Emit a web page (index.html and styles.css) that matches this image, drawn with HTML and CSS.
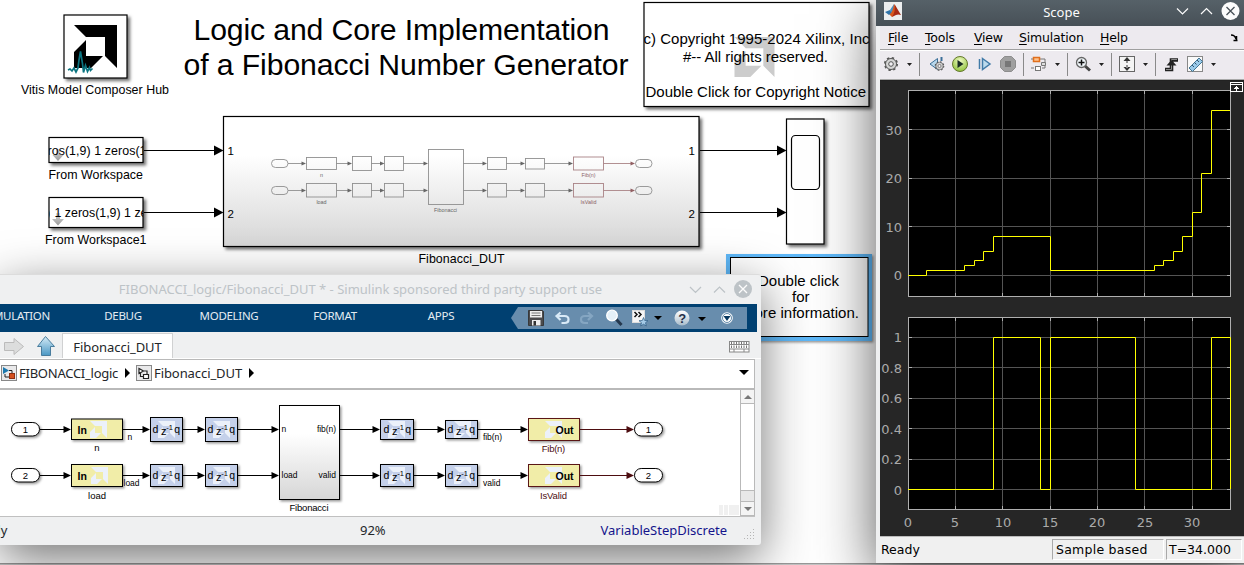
FILE: index.html
```html
<!DOCTYPE html>
<html lang="en">
<head>
<meta charset="utf-8">
<title>Fibonacci Number Generator</title>
<link rel="stylesheet" href="styles.css">
</head>
<body>
<main class="desktop">

<svg class="model" width="876" height="565" viewBox="0 0 876 565">
  <defs>
    <linearGradient id="sub" x1="0" y1="0" x2="0" y2="1"><stop offset=".3" stop-color="#fff"/><stop offset="1" stop-color="#d6d6d6"/></linearGradient>
    <linearGradient id="tip" x1="0" y1="0" x2="0" y2="1"><stop offset="0" stop-color="#ddd"/><stop offset="1" stop-color="#999"/></linearGradient>
    <filter id="drop" x="-20%" y="-20%" width="150%" height="150%"><feDropShadow dx="2.5" dy="2.5" stdDeviation="1.5" flood-color="#000" flood-opacity=".55"/></filter>
    <filter id="soft" x="-20%" y="-20%" width="150%" height="160%"><feDropShadow dx="1.5" dy="1.5" stdDeviation="1" flood-color="#000" flood-opacity=".4"/></filter>
    <path id="head" d="M-9.5-5L0 0L-9.5 5Z"/>
    <path id="minihead" d="M-4.5-2L0 0L-4.5 2Z"/>
    <path id="amd" d="M0 0H43V43L31 31V12H12ZM12 15V31H29L17 43H0V27Z"/>
    <clipPath id="c1"><rect x="49" y="138" width="94" height="25"/></clipPath>
    <clipPath id="c2"><rect x="49" y="198" width="94" height="30"/></clipPath>
    <clipPath id="c3"><rect x="644" y="3" width="225" height="103"/></clipPath>
  </defs>

  <rect class="block" x="64" y="15" width="63" height="63" filter="url(#drop)"/>
  <use href="#amd" x="74" y="25"/>
  <path d="M68 70l2-1 2 2 2-3 2 4 2-4 1-8 1.500-8.500 2 12 1 9 2-7 2 6 2-4 1 3 2-2" fill="none" stroke="#0b7480" stroke-width="1.700"/>
  <text x="21" y="94" font-size="12.400" textLength="148">Vitis Model Composer Hub</text>

  <text x="193.500" y="39.500" font-size="30.200" textLength="416">Logic and Core Implementation</text>
  <text x="183.500" y="74.500" font-size="30.200" textLength="445">of a Fibonacci Number Generator</text>

  <rect class="block" x="644" y="2.500" width="225" height="104" filter="url(#drop)"/>
  <use href="#amd" fill="#ccc" transform="translate(734.500 37) scale(.93)"/>
  <g clip-path="url(#c3)" font-size="15">
    <text x="643.500" y="44" textLength="226">c) Copyright 1995-2024 Xilinx, Inc</text>
    <text x="683" y="62" textLength="145">#-- All rights reserved.</text>
    <text x="645.500" y="97" textLength="220.500">Double Click for Copyright Notice</text>
  </g>

  <rect class="block" x="49" y="137.500" width="94" height="25" filter="url(#drop)"/>
  <path d="M56 149h4v6h3.500l-5.500 6-5.500-6h3.500z" fill="url(#tip)"/>
  <text x="47.500" y="155" font-size="12.400" textLength="99" clip-path="url(#c1)">ros(1,9) 1 zeros(1</text>
  <text x="48.500" y="179" font-size="12.400" textLength="94.500">From Workspace</text>
  <rect class="block" x="49" y="197.500" width="94" height="30" filter="url(#drop)"/>
  <path d="M56 213h4v6h4l-6 6.500-6-6.500h4z" fill="url(#tip)"/>
  <g clip-path="url(#c2)"><text x="46" y="217" font-size="12.400">)</text><text x="54.500" y="217" font-size="12.400" textLength="93">1 zeros(1,9) 1 ze</text></g>
  <text x="45" y="244" font-size="12.400" textLength="101.500">From Workspace1</text>

  <path class="wire" d="M144 150.500H215M144 212.500H215M700 150.500H778M700 212.500H778"/>
  <use href="#head" x="223.500" y="150.500"/><use href="#head" x="223.500" y="212.500"/>
  <rect class="block" x="223.500" y="116.500" width="475.500" height="130" style="fill:url(#sub)" filter="url(#drop)"/>
  <g font-size="11.500"><text x="227.500" y="155">1</text><text x="227.500" y="218">2</text><text x="688.500" y="155">1</text><text x="688.500" y="218">2</text></g>
  <text x="418.500" y="263" font-size="12.400" textLength="86">Fibonacci_DUT</text>

  <g class="mini">
    <rect x="271.500" y="159.500" width="16.500" height="8" rx="4"/><rect x="271.500" y="186.500" width="16.500" height="8" rx="4"/>
    <rect x="306.500" y="157.500" width="30" height="12"/><rect x="306.500" y="183.500" width="30" height="13.500"/>
    <rect x="352.500" y="156.500" width="19" height="14"/><rect x="352.500" y="183.500" width="19" height="13.500"/>
    <rect x="384.500" y="156.500" width="19" height="14"/><rect x="384.500" y="183.500" width="19" height="13.500"/>
    <rect x="428.500" y="149.500" width="35" height="55"/>
    <rect x="487.500" y="157.500" width="19" height="12"/><rect x="487.500" y="183.500" width="19" height="13.500"/>
    <rect x="525.500" y="158.500" width="19" height="10.500"/><rect x="525.500" y="183.500" width="19" height="13.500"/>
    <rect x="635.500" y="159.500" width="16.500" height="8" rx="4"/><rect x="635.500" y="186.500" width="16.500" height="8" rx="4"/>
    <path d="M288 163.500H303M336 163.500H349M371 163.500H381M403 163.500H425M463 163.500H484M506 163.500H522M544 163.500H570M288 190.500H303M336 190.500H349M371 190.500H381M403 190.500H425M463 190.500H484M506 190.500H522M544 190.500H570"/>
    <g class="rose"><rect x="573.500" y="157" width="30" height="13"/><rect x="573.500" y="183.500" width="30" height="13.500"/><path d="M603.500 163.500H632M603.500 190.500H632"/></g>
  </g>
  <g fill="#666">
    <use href="#minihead" x="306" y="163.500"/><use href="#minihead" x="352" y="163.500"/><use href="#minihead" x="384.500" y="163.500"/><use href="#minihead" x="428" y="163.500"/><use href="#minihead" x="487" y="163.500"/><use href="#minihead" x="525" y="163.500"/><use href="#minihead" x="573" y="163.500"/>
    <use href="#minihead" x="306" y="190.500"/><use href="#minihead" x="352" y="190.500"/><use href="#minihead" x="384.500" y="190.500"/><use href="#minihead" x="428" y="190.500"/><use href="#minihead" x="487" y="190.500"/><use href="#minihead" x="525" y="190.500"/><use href="#minihead" x="573" y="190.500"/>
  </g>
  <g fill="#915f62"><use href="#minihead" x="635" y="163.500"/><use href="#minihead" x="635" y="190.500"/></g>
  <g font-size="5.400" text-anchor="middle" fill="#666"><text x="321.500" y="177">n</text><text x="321.500" y="204">load</text><text x="445.500" y="212">Fibonacci</text><g fill="#8a6265"><text x="588.500" y="177">Fib(n)</text><text x="588.500" y="204">IsValid</text></g></g>

  <rect class="block" x="786.500" y="119" width="37.500" height="125" filter="url(#drop)"/>
  <rect x="791.500" y="135.500" width="28" height="54" rx="4" fill="none" stroke="#000" stroke-width="1.200"/>
  <use href="#head" x="786.500" y="150.500"/><use href="#head" x="786.500" y="212.500"/>

  <rect x="728" y="256" width="142" height="83" fill="#fff" stroke="#5fb8f8" stroke-width="4" filter="url(#soft)"/>
  <rect x="730.500" y="257.500" width="137.500" height="79" fill="#fff" stroke="#000"/>
  <g font-size="15"><text x="758" y="286" textLength="81">Double click</text><text x="792" y="302">for</text><text x="742" y="318" textLength="117">more information.</text></g>
</svg>
<div class="model-edge"></div>

<section class="win editor">
  <header class="ed-title">
    <span class="ed-caption">FIBONACCI_logic/Fibonacci_DUT * - Simulink sponsored third party support use</span>
    <svg width="72" height="30" fill="none">
      <path d="M4 12l5.500 5.500L15 12M28 17.500L33.500 12 39 17.500" stroke="#bdc3c7" stroke-width="1.200"/>
      <circle cx="57" cy="14" r="9" fill="#bdc3c7"/><path d="M53 10l8 8M61 10l-8 8" stroke="#fcfcfc" stroke-width="1.300"/>
    </svg>
  </header>
  <nav class="strip">
    <span class="tab t1">SIMULATION</span><span class="tab t2">DEBUG</span><span class="tab t3">MODELING</span><span class="tab t4">FORMAT</span><span class="tab t5">APPS</span>
    <svg class="quick" width="238" height="22" viewBox="510 307 238 22">
      <defs>
        <linearGradient id="orb" x1="0" y1="0" x2="0" y2="1"><stop offset="0" stop-color="#fff"/><stop offset="1" stop-color="#a9bccb"/></linearGradient>
      </defs>
      <path d="M511 318L518 307H747V329H518Z" fill="#688dad"/>
      <path d="M528.500 310.500h14l1 1v14h-15z" fill="#4b4b4d" stroke="#37383a"/><rect x="530" y="311" width="12" height="6.500" fill="#eee"/><path d="M531.500 313h9M531.500 315.500h9" stroke="#777"/><rect x="532" y="320" width="8.500" height="5.500" fill="#eee"/><rect x="533.500" y="321" width="2.500" height="4.500" fill="#333"/>
      <path d="M560.500 312.500l-4 3.500 4 4M557 316h7.500q4 0 4 3.500t-4 3.500h-3" fill="none" stroke="#d9eaf7" stroke-width="2.200"/>
      <path d="M588 312.500l4 3.500-4 4M592 316h-7q-4 0-4 3.500t4 3.500h3" fill="none" stroke="#85a6c2" stroke-width="2.200"/>
      <path d="M616 319l5.500 6" stroke="#25384d" stroke-width="3"/><circle cx="612" cy="315.500" r="5.300" fill="#e4f0f8" stroke="#fff" stroke-width="1.300"/>
      <rect x="632.500" y="310.500" width="12" height="12" fill="#f6f6f6" stroke="#ddd"/><path d="M634.500 312l2.500 2.500-2.500 2.500M638.500 312l2.500 2.500-2.500 2.500" fill="none" stroke="#111" stroke-width="1.500"/><path d="M643.500 317.500l1.200 3 3.300.2-2.500 2 .8 3.300-2.800-1.800-2.800 1.800.8-3.300-2.500-2 3.300-.2z" fill="#a5cbe8" stroke="#2d5b84" stroke-width=".7"/>
      <path d="M654 316h8l-4 4zM698 317h8l-4 4z" fill="#000"/>
      <circle cx="682" cy="318" r="7.500" fill="url(#orb)"/><text x="682" y="323" text-anchor="middle" font-size="13" font-weight="bold" fill="#222f48">?</text>
      <circle cx="727" cy="318" r="5.800" fill="#fff"/><circle cx="727" cy="318" r="4.500" fill="#fff" stroke="#3c6d94" stroke-width=".8"/><path d="M723.500 316h7l-3.500 5z" fill="#07385f"/>
    </svg>
  </nav>
  <div class="docs">
    <svg width="62" height="27" viewBox="0 332 62 27"><defs><linearGradient id="up" x1="0" y1="0" x2="0" y2="1"><stop offset="0" stop-color="#d5ebf6"/><stop offset="1" stop-color="#4a97c4"/></linearGradient></defs>
      <path d="M4.500 343.500H14V339.500L23.500 347.500 14 355.500V351.500H4.500Z" fill="#dcdddd" stroke="#bbb"/>
      <path d="M45.500 337.500L54.500 347.500H50.500V356.500H41.500V347.500H37.500Z" fill="url(#up)" stroke="#497d9e"/></svg>
    <span class="doc-tab">Fibonacci_DUT</span>
    <svg class="keys" width="21" height="12" viewBox="0 0 21 12"><rect x=".5" y=".5" width="19.500" height="10.500" fill="#fff" stroke="#888"/><path d="M1 3.500h19M1 8h19M5 8v3M15 8v3" stroke="#888" fill="none"/><path d="M2 2h17M2 5.800h17" stroke="#777" stroke-width="2.500" stroke-dasharray="1 1.500"/></svg>
  </div>
  <div class="crumbs">
    <svg width="16" height="16"><rect x=".5" y=".5" width="15" height="15" fill="#e9e9ea" stroke="#888"/><path d="M2 2l6 3.500L2 9z" fill="#1d79ae"/><path d="M8 5.500h3V9M4 9v3h4" fill="none" stroke="#222"/><rect x="8.500" y="8.500" width="5" height="5" fill="#d4501e" stroke="#8f2f10"/></svg>
    <span class="crumb c-root">FIBONACCI_logic</span><i class="arr"></i>
    <svg width="16" height="16"><rect x=".5" y=".5" width="15" height="15" fill="#e9e9ea" stroke="#888"/><path d="M3 3.500l4.500 2.500L3 8.500zM7.500 6h3.500v3M4.500 8v3.500h3M7.500 9.500h5v4h-5z" fill="#fff" stroke="#222" stroke-width="1.200"/></svg>
    <span class="crumb c-sub">Fibonacci_DUT</span><i class="arr"></i>
    <i class="drop"></i>
  </div>
  <div class="canvas-row">
    <svg class="sheet" width="740" height="126" viewBox="0 390 740 126">
      <defs>
        <g id="delay"><text x="2.500" y="4" font-size="10.500">d</text><text x="11" y="6" font-size="11">z</text><text x="16.300" y="0.500" font-size="7.500">-1</text><text x="24.300" y="4" font-size="10.500">q</text></g>
        <path id="logo" d="M0 0H17V17L12 12V5H5ZM5 6V12H11L6 17H0V11Z" fill="#ecf1fa"/>
        <path id="h2" d="M-7.500-3.500L0 0L-7.500 3.500Z"/>
      </defs>
      <g filter="url(#soft)" stroke="#000" fill="#fff">
        <rect x="11.500" y="422.500" width="28" height="13.500" rx="6.700"/><rect x="11.500" y="468.500" width="28" height="13.500" rx="6.700"/>
        <rect x="634.500" y="422.500" width="28" height="13.500" rx="6.700"/><rect x="634.500" y="468.500" width="28" height="13.500" rx="6.700"/>
        <g fill="#f1eda8"><rect x="71.500" y="419" width="51" height="20.500"/><rect x="71.500" y="464.500" width="51" height="22"/>
        <g stroke="#5a1618"><rect x="528.500" y="418.500" width="51" height="22"/><rect x="528.500" y="464.500" width="51" height="22"/></g></g>
        <g fill="#c4d0ea"><rect x="150.500" y="417.500" width="32" height="24"/><rect x="205.500" y="417.500" width="32" height="24"/><rect x="380.500" y="419.500" width="33" height="20"/><rect x="445.500" y="420.500" width="32" height="18"/>
        <rect x="150.500" y="464.500" width="32" height="22"/><rect x="205.500" y="464.500" width="32" height="22"/><rect x="380.500" y="464.500" width="33" height="22"/><rect x="445.500" y="464.500" width="32" height="22"/></g>
        <rect x="279.500" y="405.500" width="60" height="94" style="fill:url(#sub)"/>
      </g>
      <use href="#logo" x="90" y="421"/><use href="#logo" x="91" y="467"/><use href="#logo" x="545" y="421"/><use href="#logo" x="545" y="467"/>
      <use href="#logo" x="158" y="421"/><use href="#logo" x="213" y="421"/><use href="#logo" x="388" y="421"/><use href="#logo" x="454" y="421"/>
      <use href="#logo" x="158" y="467"/><use href="#logo" x="213" y="467"/><use href="#logo" x="388" y="467"/><use href="#logo" x="454" y="467"/>
      <path class="wire" d="M40 429.500H66M123 429.500H144M183 429.500H200M238 429.500H274M340 429.500H374M414 429.500H440M478 429.500H523M40 475.500H66M123 475.500H144M183 475.500H200M238 475.500H274M340 475.500H374M414 475.500H440M478 475.500H523"/>
      <path class="wire" d="M580 429.500H628M580 475.500H628" style="stroke:#4d0d10"/>
      <use href="#h2" x="71" y="429.500"/><use href="#h2" x="150" y="429.500"/><use href="#h2" x="205" y="429.500"/><use href="#h2" x="279" y="429.500"/><use href="#h2" x="380" y="429.500"/><use href="#h2" x="445" y="429.500"/><use href="#h2" x="528" y="429.500"/>
      <use href="#h2" x="71" y="475.500"/><use href="#h2" x="150" y="475.500"/><use href="#h2" x="205" y="475.500"/><use href="#h2" x="279" y="475.500"/><use href="#h2" x="380" y="475.500"/><use href="#h2" x="445" y="475.500"/><use href="#h2" x="528" y="475.500"/>
      <g fill="#4d0d10"><use href="#h2" x="634" y="429.500"/><use href="#h2" x="634" y="475.500"/></g>
      <use href="#delay" x="150" y="429"/><use href="#delay" x="205" y="429"/><use href="#delay" x="381" y="429"/><use href="#delay" x="445" y="429"/>
      <use href="#delay" x="150" y="475"/><use href="#delay" x="205" y="475"/><use href="#delay" x="381" y="475"/><use href="#delay" x="445" y="475"/>
      <g font-size="10.500" font-weight="bold"><text x="77.500" y="434">In</text><text x="77.500" y="480">In</text><text x="555.500" y="434" textLength="18">Out</text><text x="555.500" y="480" textLength="18">Out</text></g>
      <g font-size="9.500" text-anchor="middle"><text x="25.500" y="433">1</text><text x="25.500" y="479">2</text><text x="648.500" y="433">1</text><text x="648.500" y="479">2</text></g>
      <g font-size="9.500" text-anchor="middle"><text x="97" y="451">n</text><text x="97" y="499">load</text><text x="309" y="511" textLength="39">Fibonacci</text><g fill="#4d0d10"><text x="553.500" y="452" textLength="23.500">Fib(n)</text><text x="553.500" y="499" textLength="27">IsValid</text></g></g>
      <g font-size="8.500"><text x="127.500" y="440">n</text><text x="123.500" y="486">load</text><text x="483" y="440" textLength="19">fib(n)</text><text x="483" y="486">valid</text><text x="281.500" y="432">n</text><text x="281.500" y="478">load</text><text x="317" y="432" textLength="19">fib(n)</text><text x="318.500" y="478">valid</text></g>
      <path d="M719 505h4v10h-4zM724 505h4v10h-4zM729 505h10v10h-10z" fill="#f0f0f0"/>
    </svg>
    <div class="scroll"><i class="sb-up"></i><i class="sb-track"></i><i class="sb-thumb"></i><i class="sb-down"></i></div>
  </div>
  <footer class="ed-status"><span class="rdy">Ready</span><span class="zoom">92%</span><span class="solver">VariableStepDiscrete</span>
    <svg class="grip" width="11" height="12" fill="#b5b5b5"><path d="M9 0h1v1h-1zM6 3h1v1h-1zM9 3h1v1h-1zM3 6h1v1h-1zM6 6h1v1h-1zM9 6h1v1h-1zM0 9h1v1h-1zM3 9h1v1h-1zM6 9h1v1h-1zM9 9h1v1h-1z"/></svg></footer>
</section>

<section class="win scope">
  <header class="sc-title">
    <svg width="18" height="18"><rect width="18" height="18" fill="#eceeef"/><path d="M1 10l5-2 2 3-3 2z" fill="#2f73a8"/><path d="M6 8l4-6 1 8-3 3z" fill="#4b8fc0"/><path d="M10 2q2 3 3.500 8L8 15 5.500 12.500Q9 10 10 2z" fill="#d8581c"/><path d="M10.500 2Q14 8 17 13q-3-1-5 0L8 15q4-6 2.500-13z" fill="#a82a15"/></svg>
    <span class="sc-caption">Scope</span>
    <svg width="68" height="26" fill="none"><path d="M5 8.500l5.500 5.500L16 8.500M29 14L34.500 8.500 40 14" stroke="#fcfcfc" stroke-width="1.200"/><circle cx="58.500" cy="11" r="9" fill="#fcfcfc"/><path d="M54.500 7l8 8M62.500 7l-8 8" stroke="#475057" stroke-width="1.300"/></svg>
  </header>
  <div class="sc-body">
    <nav class="menu"><span class="m1"><u>F</u>ile</span><span class="m2"><u>T</u>ools</span><span class="m3"><u>V</u>iew</span><span class="m4"><u>S</u>imulation</span><span class="m5"><u>H</u>elp</span>
      <svg width="8" height="8"><path d="M1 1q4 0 5 4M3.500 6.500h4M6.500 2v4.500" fill="none" stroke="#000" stroke-width="1.500"/></svg></nav>
    <svg class="tools" width="364" height="30" viewBox="880 51 364 28">
      <defs><radialGradient id="go" cx=".5" cy=".3" r=".8"><stop offset="0" stop-color="#eefac2"/><stop offset="1" stop-color="#83bb29"/></radialGradient>
      <g id="gear"><circle r="5.500" fill="#d5d5d5" stroke="#555"/><circle r="6.300" fill="none" stroke="#555" stroke-width="1.500" stroke-dasharray="2.400 2.550"/><circle r="2.300" fill="#f1eff3" stroke="#555"/></g></defs>
      <path d="M919.500 53v23M1023.500 53v23M1067.500 53v23M1111.500 53v23M1155.500 53v23" stroke="#8a8a8a"/>
      <use href="#gear" x="891" y="64"/>
      <path d="M907 63h5l-2.500 3zM1055 63h5l-2.500 3zM1099 63h5l-2.500 3zM1143 63h5l-2.500 3zM1211 63h5l-2.500 3z" fill="#222"/>
      <path d="M937.500 58.500v11l-7.500-5.500z" fill="#b8d7ec" stroke="#3b6f98"/><path d="M941.500 57v4" stroke="#3b6f98" stroke-width="2"/><use href="#gear" transform="translate(939.500 66) scale(.68)"/>
      <circle cx="960" cy="64" r="7.500" fill="url(#go)" stroke="#65782e"/><path d="M957.500 60l6 4-6 4z" fill="#182c22"/>
      <path d="M979.500 59v10M982.500 58.500l7.500 5.500-7.500 5.500z" fill="#bddbed" stroke="#427ba8" stroke-width="1.500"/>
      <path d="M1004.500 56.500h7l4 4v7l-4 4h-7l-4-4v-7z" fill="#9f9f9f" stroke="#8d8d8d"/><rect x="1005" y="61" width="6" height="6" fill="#777"/>
      <path d="M1031 59h14v9h-3M1034 68h-3" fill="none" stroke="#777"/><rect x="1033.500" y="57.500" width="6" height="4" fill="#ffc18a" stroke="#e06f1d" stroke-width="1.500"/><rect x="1035.500" y="66.500" width="5" height="4" fill="#fff" stroke="#777"/><path d="M1041.500 62.500h4v3h-4z" fill="#ddd" stroke="#777"/>
      <path d="M1085 66l5 4.500" stroke="#444" stroke-width="3"/><circle cx="1081.500" cy="62.500" r="5" fill="#f0f6fa" stroke="#666" stroke-width="1.300"/><path d="M1078.500 62.500h6M1081.500 59.500v6" stroke="#111" stroke-width="1.500"/>
      <rect x="1119.500" y="56.500" width="15" height="15" fill="#f4f4f4" stroke="#666"/><path d="M1123.500 61l3.500-4 3.500 4zM1123.500 67l3.500 4 3.500-4zM1126.500 60h1v3h-1zM1126.500 65h1v3h-1z" fill="#333"/>
      <path d="M1165 69.500h6.500V60H1178" fill="none" stroke="#222" stroke-width="3.600"/><path d="M1166 69.500h5.500V59.500H1177" fill="none" stroke="#888" stroke-width="1"/><path d="M1166.500 65.500h10l-5-5.500z" fill="#222"/>
      <rect x="1187.500" y="56.500" width="15" height="15" fill="#fafafa" stroke="#888"/><path d="M1189 68l10-10 3.500 3.500L1192.500 71.500z" fill="#9bcbea" stroke="#427594"/><path d="M1192 65l2 2M1194.500 62.500l2 2M1197 60l2 2" stroke="#31546c"/>
    </svg>
    <svg class="plots" width="364" height="456" viewBox="880 81 364 455">
      <rect x="908" y="90" width="323" height="207"/><rect x="908" y="317" width="323" height="193"/>
      <path d="M955.500 91V296M1002.500 91V296M1050.500 91V296M1097.500 91V296M1144.500 91V296M1192.500 91V296M909 129.500H1230M909 178.500H1230M909 226.500H1230M909 275.500H1230M955.500 318V509M1002.500 318V509M1050.500 318V509M1097.500 318V509M1144.500 318V509M1192.500 318V509M909 337.500H1230M909 367.500H1230M909 398.500H1230M909 428.500H1230M909 459.500H1230M909 489.500H1230" stroke="#545454"/>
      <g fill="none" stroke="#afafaf"><rect x="908.500" y="90.500" width="322" height="206"/><rect x="908.500" y="317.500" width="322" height="192"/>
      <path d="M955.500 91v3m0 199v3M1002.500 91v3m0 199v3M1050.500 91v3m0 199v3M1097.500 91v3m0 199v3M1144.500 91v3m0 199v3M1192.500 91v3m0 199v3M955.500 318v3m0 185v3M1002.500 318v3m0 185v3M1050.500 318v3m0 185v3M1097.500 318v3m0 185v3M1144.500 318v3m0 185v3M1192.500 318v3m0 185v3M909 129.500h3m315 0h3M909 178.500h3m315 0h3M909 226.500h3m315 0h3M909 275.500h3m315 0h3M909 337.500h3m315 0h3M909 367.500h3m315 0h3M909 398.500h3m315 0h3M909 428.500h3m315 0h3M909 459.500h3m315 0h3M909 489.500h3m315 0h3"/></g>
      <g fill="none" stroke="#ff0"><path d="M908 275.500H926.500V270.500H964.500V265.500H974.500V260.500H983.500V251.500H993.500V236.500H1050.500V270.500H1154.500V265.500H1163.500V260.500H1173.500V251.500H1182.500V236.500H1192.500V212.500H1201.500V173.500H1211.500V110.500H1230"/>
      <path d="M908 489.500H993.500V337.500H1040.500V489.500H1050.500V337.500H1135.500V489.500H1211.500V337.500H1230.500V489"/></g>
      <g class="ticks" text-anchor="end"><text x="902" y="135">30</text><text x="902" y="183">20</text><text x="902" y="232">10</text><text x="902" y="280">0</text><text x="902" y="342">1</text><text x="902" y="373">0.8</text><text x="902" y="403">0.6</text><text x="902" y="434">0.4</text><text x="902" y="464">0.2</text><text x="902" y="495">0</text></g>
      <g class="ticks" text-anchor="middle"><text x="908" y="527">0</text><text x="955" y="527">5</text><text x="1003" y="527">10</text><text x="1050" y="527">15</text><text x="1097" y="527">20</text><text x="1145" y="527">25</text><text x="1192" y="527">30</text></g>
      <rect x="1230.500" y="82.500" width="12" height="9" fill="#262626" stroke="#fff"/><path d="M1231 84.500h11M1236.500 86v5M1234 88.500h5M1235 87.500h3" stroke="#fff"/>
    </svg>
    <footer class="sc-status"><span class="ready">Ready</span><span class="cell sample">Sample based</span><span class="cell time">T=34.000</span></footer>
  </div>
</section>
</main>
</body>
</html>
```

FILE: styles.css
```css
* { box-sizing: border-box; }
body { margin: 0; }
.desktop { position: relative; width: 1244px; height: 565px; overflow: hidden; background: #fff; font-family: "Noto Sans", sans-serif; font-size: 13px; }
.desktop svg { display: block; flex: none; }
.desktop svg text { white-space: pre; }

/* model canvas */
.model, .sheet, .quick { font-family: "Liberation Sans", Arial, sans-serif; }
.model { position: absolute; left: 0; top: 0; }
.block { fill: #fff; stroke: #000; stroke-width: 1.2; }
.wire { fill: none; stroke: #000; }
.mini { fill: none; stroke: #909090; stroke-width: .9; }
.mini .rose { stroke: #a98386; }
.model-edge { position: absolute; left: 0; bottom: 0; width: 100%; height: 2px; background: #c4c4c4; border-top: 1px solid #999; }

.win { position: absolute; display: flex; flex-direction: column; }

/* subsystem editor */
.editor { left: 0; top: 274px; width: 761px; height: 271px; background: #eff0f1; border-top: 1px solid #dcdcdc; border-radius: 0 3px 3px 0; box-shadow: 0 14px 50px rgba(0,0,0,.55); color: #232629; }
.ed-title { height: 29px; display: flex; justify-content: flex-end; color: #bdc3c7; line-height: 29px; }
.ed-caption { margin-right: 84px; white-space: nowrap; }
.ed-title svg { margin-right: 3px; }
.strip { height: 28px; width: 757px; background: #004071; display: flex; align-items: center; color: #e4ecf2; font-size: 11.5px; letter-spacing: -.3px; }
.tab { flex: none; width: 106px; text-align: center; line-height: 24px; height: 28px; }
.t1 { width: 69px; margin-left: -19px; text-align: right; }
.t2 { margin-left: 20px; }
.quick { margin-left: auto; margin-right: 9px; }
.docs { height: 27px; display: flex; align-items: flex-end; border-bottom: 1px solid #fff; }
.doc-tab { width: 111px; height: 25px; background: #fff; border: 1px solid #d0d1d2; border-bottom: 0; text-align: center; line-height: 26px; letter-spacing: -.05px; }
.keys { margin-left: auto; margin-right: 11px; margin-bottom: 5px; }
.crumbs { height: 31px; width: 755px; background: #fff; border: solid #b9b9b9; border-width: 1px 1px 2px 0; display: flex; align-items: center; padding-left: 1px; padding-bottom: 3px; }
.crumb { margin-left: 2px; white-space: nowrap; width: 106px; }
.c-root { letter-spacing: -.25px; }
.c-sub { width: 95px; letter-spacing: -.08px; }
.arr { border: solid transparent; border-width: 5px 0 5px 5px; border-left-color: #000; margin-right: 6px; }
.drop { border: solid transparent; border-width: 5px 5px 0; border-top-color: #000; margin-left: auto; margin-right: 5px; }
.canvas-row { height: 126px; width: 755px; display: flex; background: #fff; }
.scroll { width: 15px; display: flex; flex-direction: column; border: solid #b9b9b9; border-width: 0 1px; background: #fff; }
.sb-up, .sb-down { height: 14px; display: flex; justify-content: center; align-items: center; border-bottom: 1px solid #b9b9b9; background: #f4f4f4; }
.sb-up::before, .sb-down::before { content: ""; border: solid transparent; border-width: 0 4px 4px; border-bottom-color: #777; }
.sb-down::before { border-width: 4px 4px 0; border-top-color: #777; }
.sb-track { flex: 1; }
.sb-thumb { height: 12px; border: solid #b9b9b9; border-width: 1px 0; background: #e8e8e8; }
.ed-status { flex: 1; width: 755px; display: flex; align-items: center; border-top: 1px solid #c0c0c0; padding-bottom: 2px; }
.rdy { margin-left: -30px; width: 36px; text-align: right; }
.zoom { margin-left: 354px; }
.solver { margin-left: auto; color: #14148c; }
.grip { margin-left: 17px; margin-top: 9px; }

/* scope window */
.scope { left: 876px; top: 0; width: 368px; height: 563px; background: #eff0f1; box-shadow: 0 14px 55px rgba(0,0,0,.65); }
.sc-title { height: 26px; background: linear-gradient(#566168, #475057); display: flex; align-items: center; color: #fcfcfc; padding-left: 8px; }
.sc-title > svg:first-child { margin-bottom: 4px; }
.sc-caption { flex: 1; padding-left: 49px; text-align: center; line-height: 24px; height: 26px; }
.sc-title > svg:last-child { margin-right: 4px; }
.sc-body { margin-left: 4px; display: flex; flex-direction: column; flex: 1; font-family: "DejaVu Sans", sans-serif; font-size: 12.5px; color: #000; }
.menu { height: 24px; background: #edeaef; border-bottom: 1px solid #9f9f9f; display: flex; align-items: center; padding-left: 8px; letter-spacing: -.2px; }
.menu u { text-underline-offset: 2px; }
.m1 { width: 37px; } .m2 { width: 49px; } .m3 { width: 45px; } .m4 { width: 81px; } .m5 { flex: 1; }
.menu svg { margin-right: 6px; }
.tools { background: #edeaef; border-top: 1px solid #fff; border-bottom: 1px solid #a9a9a9; height: 30px; }
.plots { background: #262626; border-top: 1px solid #222; height: 456px; }
.ticks { font-size: 13px; fill: #aaa; }
.sc-status { flex: 1; display: flex; align-items: center; border-top: 1px solid #bbb; background: #f0f0f0; padding-bottom: 1px; }
.ready { width: 172px; padding-left: 1px; }
.cell { height: 21px; line-height: 20px; border: 1px solid #fff; border-top-color: #a9a9a9; border-left-color: #a9a9a9; padding-left: 2px; white-space: nowrap; }
.sample { width: 112px; margin-right: 2px; padding-left: 3px; letter-spacing: .25px; }
.time { width: 76px; }
```
